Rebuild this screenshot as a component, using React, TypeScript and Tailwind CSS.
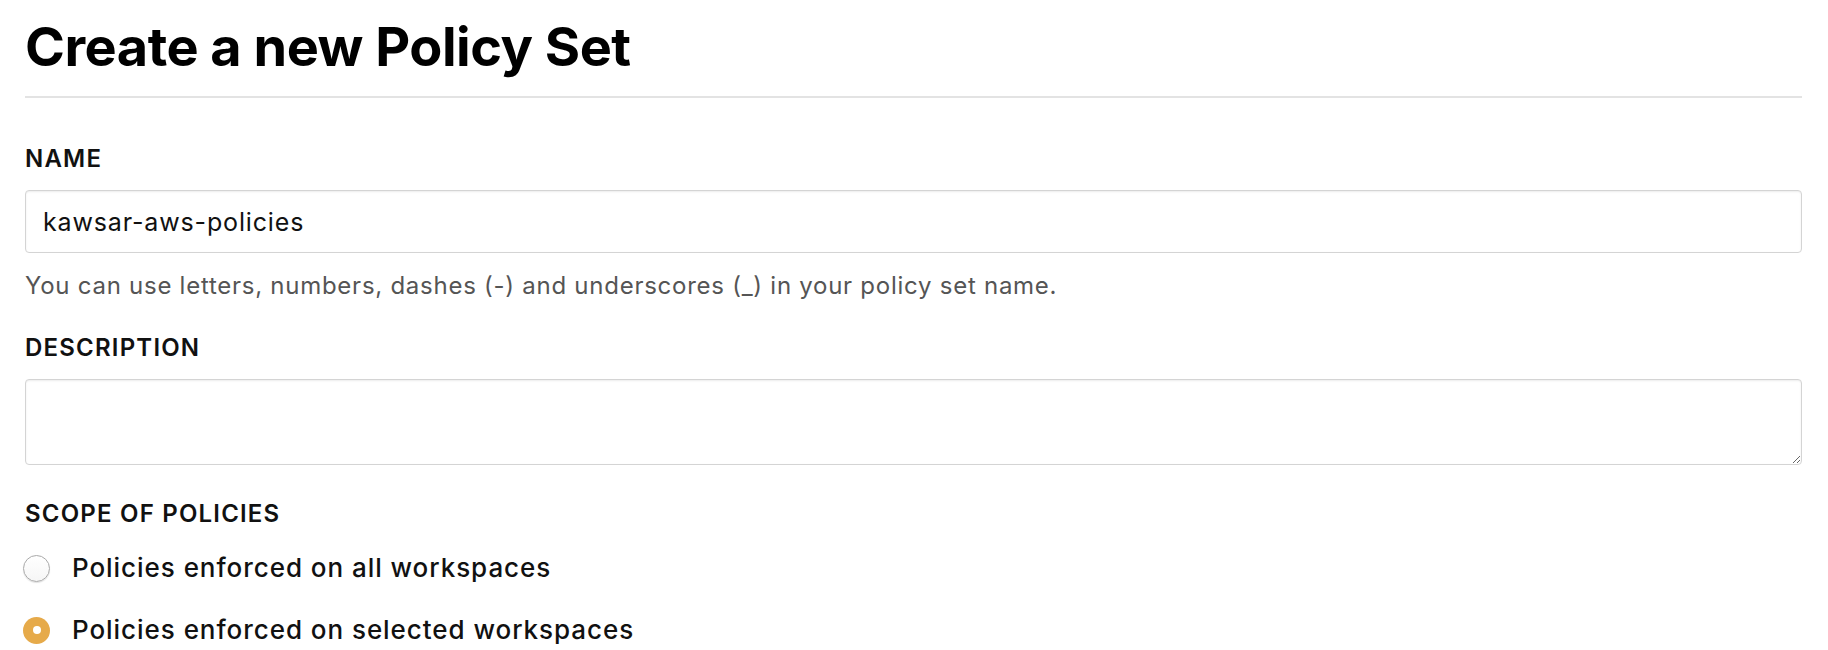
import { useState } from 'react'

// 정책 세트 생성 폼
export default function App() {
  const [name, setName] = useState('kawsar-aws-policies')
  const [description, setDescription] = useState('')
  const [scope, setScope] = useState('selected')

  return (
    <div className="min-h-screen bg-white pl-[25px] pr-[26px] pt-[20px] text-[#111] font-['Inter','Liberation_Sans',sans-serif]">
      <h1 className="text-[54px] leading-[54px] font-bold tracking-[-0.5px] text-black">Create a new Policy Set</h1>
      <div className="mt-[22px] h-[2px] bg-[#e3e3e3]" />

      <label className="mt-[47px] block text-[24px] leading-[28px] font-semibold tracking-[1.2px]">NAME</label>
      <input
        value={name}
        onChange={(e) => setName(e.target.value)}
        className="mt-[17px] block h-[63px] w-full rounded-[4px] border border-[#d4d4d4] px-[17px] text-[25px] tracking-[0.85px] text-[#111] shadow-[inset_0_1px_2px_rgba(0,0,0,0.08)] outline-none"
      />
      <p className="mt-[18px] text-[24px] leading-[30px] tracking-[0.74px] text-[#555]">
        You can use letters, numbers, dashes (-) and underscores (_) in your policy set name.
      </p>

      <label className="mt-[33px] block text-[24px] leading-[28px] font-semibold tracking-[1.2px]">DESCRIPTION</label>
      <textarea
        value={description}
        onChange={(e) => setDescription(e.target.value)}
        className="mt-[17px] block h-[86px] w-full rounded-[4px] border border-[#d4d4d4] px-[17px] py-[12px] text-[24px] shadow-[inset_0_1px_2px_rgba(0,0,0,0.08)] outline-none"
      />

      <div className="mt-[35px] text-[24px] leading-[28px] font-semibold tracking-[1.2px]">SCOPE OF POLICIES</div>

      <div className="mt-[24px] flex flex-col gap-[30px]">
        {[
          { value: 'all', label: 'Policies enforced on all workspaces' },
          { value: 'selected', label: 'Policies enforced on selected workspaces' },
        ].map((opt) => {
          const checked = scope === opt.value
          return (
            <label key={opt.value} className="flex h-[32px] items-center gap-[22px] -ml-[2px] cursor-pointer">
              <input
                type="radio"
                name="scope"
                className="sr-only"
                checked={checked}
                onChange={() => setScope(opt.value)}
              />
              {checked ? (
                <span className="flex h-[27px] w-[27px] items-center justify-center rounded-full bg-[#e6aa4a]">
                  <span className="h-[8px] w-[8px] rounded-full bg-white" />
                </span>
              ) : (
                <span className="h-[27px] w-[27px] rounded-full border border-[#a9a9a9] bg-gradient-to-b from-white to-[#f6f6f6] shadow-[0_1px_1px_rgba(0,0,0,0.12)]" />
              )}
              <span className="text-[26px] leading-[32px] font-medium tracking-[0.95px] text-[#111]">{opt.label}</span>
            </label>
          )
        })}
      </div>
    </div>
  )
}
